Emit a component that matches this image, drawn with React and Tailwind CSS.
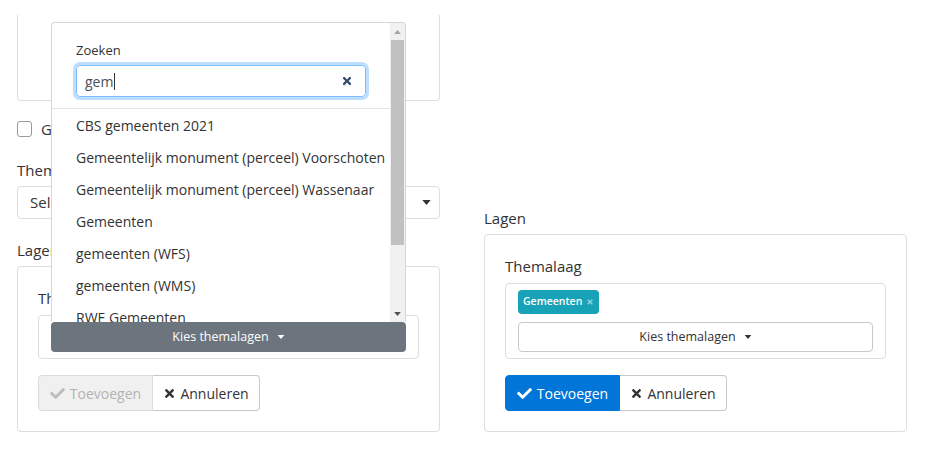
import { FaCheck, FaTimes } from "react-icons/fa";

const items = [
  "CBS gemeenten 2021",
  "Gemeentelijk monument (perceel) Voorschoten",
  "Gemeentelijk monument (perceel) Wassenaar",
  "Gemeenten",
  "gemeenten (WFS)",
  "gemeenten (WMS)",
  "RWE Gemeenten",
];

function Caret({ className }) {
  return (
    <svg viewBox="0 0 10 6" className={className} fill="currentColor">
      <path d="M0 0h10L5 6z" />
    </svg>
  );
}

function Dropdown() {
  return (
    <div className="absolute bottom-full left-0 z-20 flex h-[300px] w-full overflow-hidden rounded-t border border-b-0 border-[#d6d6d6] bg-white">
      <div className="flex min-w-0 flex-1 flex-col">
        <div className="border-b border-[#e5e5e5] pb-[11px] pl-[24px] pr-[24px] pt-[18px]">
          <div className="text-[13px] leading-[18px] text-[#333]">Zoeken</div>
          <div className="mt-[6px] flex h-[32px] items-center rounded border border-[#80bdff] px-[8px] shadow-[0_0_0_3px_rgba(0,123,255,0.25)]">
            <span className="text-[14px] text-[#495057]">gem</span>
            <span className="ml-px h-[17px] w-px bg-[#333]" />
            <span className="flex-1" />
            <FaTimes className="mr-[4px] h-[12px] w-[12px] text-[#2f4a6d]" />
          </div>
        </div>
        <div className="flex-1 overflow-hidden">
          {items.map((label) => (
            <div
              key={label}
              className="flex h-[32px] shrink-0 items-center whitespace-nowrap pl-[24px] text-[14px] text-[#333]"
            >
              {label}
            </div>
          ))}
        </div>
      </div>
      {/* scrollbar */}
      <div className="flex w-[15px] flex-col bg-[#f1f1f1]">
        <div className="flex h-[17px] items-center justify-center">
          <Caret className="h-[4px] w-[7px] rotate-180 text-[#a3a3a3]" />
        </div>
        <div className="mx-[1px] h-[205px] bg-[#c1c1c1]" />
        <div className="flex-1" />
        <div className="flex h-[17px] items-center justify-center">
          <Caret className="h-[4px] w-[7px] text-[#505050]" />
        </div>
      </div>
    </div>
  );
}

function ButtonGroup({ active }) {
  return (
    <div className="flex h-[36px] text-[14px]">
      {active ? (
        <button className="flex w-[115px] items-center justify-center gap-[5px] rounded-l border border-[#0275d8] bg-[#0275d8] text-white">
          <FaCheck className="h-[15px] w-[15px]" />
          Toevoegen
        </button>
      ) : (
        <button className="flex w-[115px] items-center justify-center gap-[5px] rounded-l border border-[#dcdcdc] bg-[#f0f0f0] text-[#b3b3b3]">
          <FaCheck className="h-[15px] w-[15px] text-[#bdbdbd]" />
          Toevoegen
        </button>
      )}
      <button className="flex w-[107px] items-center justify-center gap-[4px] rounded-r border border-l-0 border-[#c8c8c8] bg-white text-[#333]">
        <FaTimes className="h-[13px] w-[13px]" />
        Annuleren
      </button>
    </div>
  );
}

function LayerCard({ open, badge }) {
  return (
    <div className="rounded border border-[#dedede] px-[20px] pb-[20px] pt-[20px]">
      <div className="text-[15px] leading-[22px] text-[#333]">Themalaag</div>
      <div className="mt-[6px] flex flex-col gap-[8px] rounded border border-[#dedede] px-[12px] py-[6px]">
        {badge && (
          <div className="flex">
            <span className="flex h-[24px] items-center gap-[4px] rounded-[4px] bg-[#17a2b8] px-[5px] text-[10.5px] font-semibold text-white">
              Gemeenten
              <FaTimes className="h-[8px] w-[8px] text-[#8ad3df]" />
            </span>
          </div>
        )}
        <div className="relative">
          {open && <Dropdown />}
          {open ? (
            <button className="flex h-[30px] w-full items-center justify-center gap-[8px] rounded bg-[#6c757d] text-[12.5px] text-white">
              Kies themalagen
              <Caret className="h-[4px] w-[8px]" />
            </button>
          ) : (
            <button className="flex h-[30px] w-full items-center justify-center gap-[8px] rounded border border-[#c8c8c8] bg-white text-[12.5px] text-[#333]">
              Kies themalagen
              <Caret className="h-[4px] w-[8px]" />
            </button>
          )}
        </div>
      </div>
      <div className="mt-[16px]">
        <ButtonGroup active={!open} />
      </div>
    </div>
  );
}

export default function App() {
  return (
    <div className="flex h-[452px] w-[925px] overflow-hidden bg-white pl-[17px] font-['Open_Sans',sans-serif] text-[#333]">
      {/* Left column */}
      <div className="flex w-[423px] flex-col">
        <div className="mt-[15px] h-[86px] rounded-b border-x border-b border-[#dedede]" />
        <div className="mt-[20px] flex h-[16px] items-center gap-[9px]">
          <span className="h-[16px] w-[15px] rounded-[3px] border border-[#9a9a9a] bg-white" />
          <span className="text-[15px]">Geen filter</span>
        </div>
        <div className="mt-[22px] text-[15px] leading-[22px]">Themagroep</div>
        <div className="mt-[5px] flex h-[33px] items-center justify-between rounded border border-[#dedede] pl-[12px] pr-[8px]">
          <span className="text-[15px]">Selecteer een themagroep</span>
          <Caret className="h-[5px] w-[9px] text-[#333]" />
        </div>
        <div className="mt-[20px] text-[15px] leading-[22px]">Lagen</div>
        <div className="mt-[5px]">
          <LayerCard open />
        </div>
      </div>

      {/* Right column */}
      <div className="ml-[44px] flex w-[423px] flex-col">
        <div className="mt-[207px] text-[15px] leading-[22px]">Lagen</div>
        <div className="mt-[5px]">
          <LayerCard badge />
        </div>
      </div>
    </div>
  );
}
